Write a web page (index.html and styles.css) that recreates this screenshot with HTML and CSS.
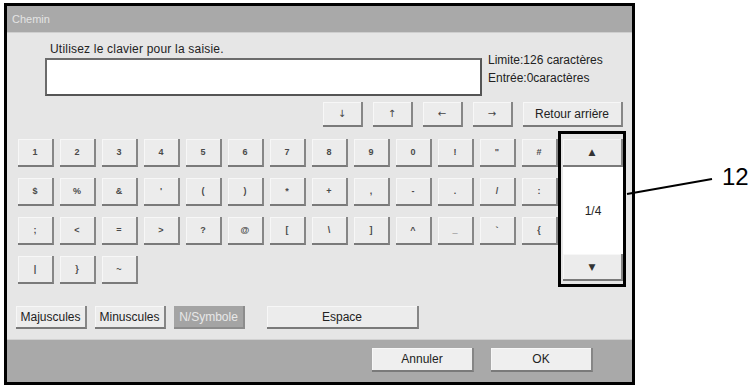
FILE: index.html
```html
<!DOCTYPE html>
<html lang="fr">
<head>
    <meta charset="UTF-8">
    <meta name="viewport" content="width=device-width, initial-scale=1.0">
    <title>Chemin</title>
    <link rel="stylesheet" href="styles.css">
</head>
<body>

    <div class="screen">
        <div class="title">Chemin</div>

        <div class="main">
            <div class="entry">
                <p class="prompt">Utilisez le clavier pour la saisie.</p>
                <div class="field"></div>
                <div class="count">
                    <div>Limite:126 caractères</div>
                    <div>Entrée:0caractères</div>
                </div>
            </div>

            <div class="nav">
                <div class="key arrow">↓</div>
                <div class="key arrow">↑</div>
                <div class="key arrow">←</div>
                <div class="key arrow">→</div>
                <div class="key text back">Retour arrière</div>
            </div>

            <div class="board">
                <div class="keys">
                    <div class="key">1</div><div class="key">2</div><div class="key">3</div><div class="key">4</div>
                    <div class="key">5</div><div class="key">6</div><div class="key">7</div><div class="key">8</div>
                    <div class="key">9</div><div class="key">0</div><div class="key">!</div><div class="key">"</div>
                    <div class="key">#</div>

                    <div class="key">$</div><div class="key">%</div><div class="key">&amp;</div><div class="key">'</div>
                    <div class="key">(</div><div class="key">)</div><div class="key">*</div><div class="key">+</div>
                    <div class="key">,</div><div class="key">-</div><div class="key">.</div><div class="key">/</div>
                    <div class="key">:</div>

                    <div class="key">;</div><div class="key">&lt;</div><div class="key">=</div><div class="key">&gt;</div>
                    <div class="key">?</div><div class="key">@</div><div class="key">[</div><div class="key">\</div>
                    <div class="key">]</div><div class="key">^</div><div class="key">_</div><div class="key">`</div>
                    <div class="key">{</div>

                    <div class="key">|</div><div class="key">}</div><div class="key">~</div>
                </div>

                <div class="pager">
                    <div class="key page-btn up">▲</div>
                    <div class="page">1/4</div>
                    <div class="key page-btn">▼</div>
                </div>
            </div>

            <div class="modes">
                <div class="key text mode">Majuscules</div>
                <div class="key text mode">Minuscules</div>
                <div class="key text mode active">N/Symbole</div>
                <div class="key text space">Espace</div>
            </div>
        </div>

        <div class="footer">
            <div class="key text action">Annuler</div>
            <div class="key text action">OK</div>
        </div>
    </div>

    <div class="callout">
        <svg class="leader" width="90" height="40" viewBox="0 0 90 40">
            <line x1="1" y1="34" x2="86" y2="19" stroke="#000" stroke-width="2"/>
        </svg>
        <span class="label">12</span>
    </div>

</body>
</html>
```

FILE: styles.css
```css
body {
    margin: 0;
    background: #fff;
    font-family: "Liberation Sans", Arial, sans-serif;
    font-size: 12px;
    color: #222;
}

.screen {
    margin: 3px 0 0 4px;
    width: 631px;
    box-sizing: border-box;
    border: 3px solid #000;
}

.title {
    height: 27px;
    line-height: 27px;
    padding-left: 5px;
    background: #a9a9a9;
    color: #e4e4e4;
    font-size: 11px;
    border-bottom: 1px solid #cfcfcf;
    box-sizing: border-box;
}

.main {
    height: 306px;
    box-sizing: border-box;
    padding: 10px 0;
    background: #e6e6e6;
}

.entry {
    display: grid;
    grid-template-columns: 437px auto;
    column-gap: 6px;
    margin-left: 38px;
}

.prompt {
    grid-column: 1 / 3;
    margin: 0 0 2px 5px;
    line-height: 13px;
    letter-spacing: 0.2px;
}

.field {
    height: 38px;
    box-sizing: border-box;
    background: #fff;
    border: 2px solid #6b6b6b;
    border-right-color: #555;
    border-bottom-color: #555;
}

.count {
    margin-top: -7px;
    line-height: 18px;
}

/* touches */
.key {
    display: flex;
    align-items: center;
    justify-content: center;
    box-sizing: border-box;
    background: #ececec;
    border-right: 2px solid #868686;
    border-bottom: 2px solid #7a7a7a;
    box-shadow: inset 1px 1px 0 #f7f7f7;
    font-size: 9px;
    font-weight: bold;
    color: #4a4a4a;
}

.key.text {
    font-size: 12px;
    font-weight: normal;
    color: #222;
}

.nav {
    display: flex;
    justify-content: flex-end;
    gap: 10px;
    height: 25px;
    margin: 6px 9px 0 0;
}

.nav .key {
    width: 40px;
}

.nav .arrow {
    font-family: "DejaVu Sans", sans-serif;
    font-weight: normal;
    font-size: 10px;
    color: #444;
}

.nav .back {
    width: 100px;
}

.board {
    display: flex;
    height: 145px;
    margin: 12px 0 0 11px;
}

.keys {
    display: grid;
    grid-template-columns: repeat(13, 36px);
    grid-auto-rows: 28px;
    column-gap: 6px;
    row-gap: 11px;
}

.pager {
    position: relative;
    display: flex;
    flex-direction: column;
    width: 60px;
    height: 142px;
    margin-left: 5px;
}

.pager::before {
    content: "";
    position: absolute;
    top: -8px;
    left: -5px;
    right: -3px;
    bottom: -6px;
    border: 3px solid #000;
}

.page-btn {
    height: 27px;
    font-family: "DejaVu Sans", sans-serif;
    font-size: 9px;
    color: #333;
}

.page-btn.up {
    height: 28px;
}

.page {
    flex: 1;
    display: flex;
    align-items: center;
    justify-content: center;
    background: #fff;
    font-size: 12px;
}

.modes {
    display: flex;
    gap: 8px;
    height: 23px;
    margin: 22px 0 0 9px;
}

.mode {
    width: 71px;
}

.mode.active {
    background: #a4a4a4;
    color: #e8e8e8;
    border-right-color: #8c8c8c;
    border-bottom-color: #8c8c8c;
    box-shadow: none;
}

.space {
    width: 152px;
    margin-left: 14px;
}

.footer {
    display: flex;
    justify-content: flex-end;
    gap: 17px;
    height: 43px;
    box-sizing: border-box;
    padding: 8px 39px 0 0;
    background: #a9a9a9;
    border-top: 1px solid #d2d2d2;
}

.action {
    width: 102px;
    height: 24px;
    background: #efefef;
}

/* repère d'annotation */
.callout {
    position: absolute;
    left: 626px;
    top: 160px;
    width: 125px;
    height: 40px;
}

.leader {
    display: block;
}

.label {
    position: absolute;
    left: 96px;
    top: 5px;
    font-size: 24px;
    line-height: 24px;
    color: #000;
}
```
